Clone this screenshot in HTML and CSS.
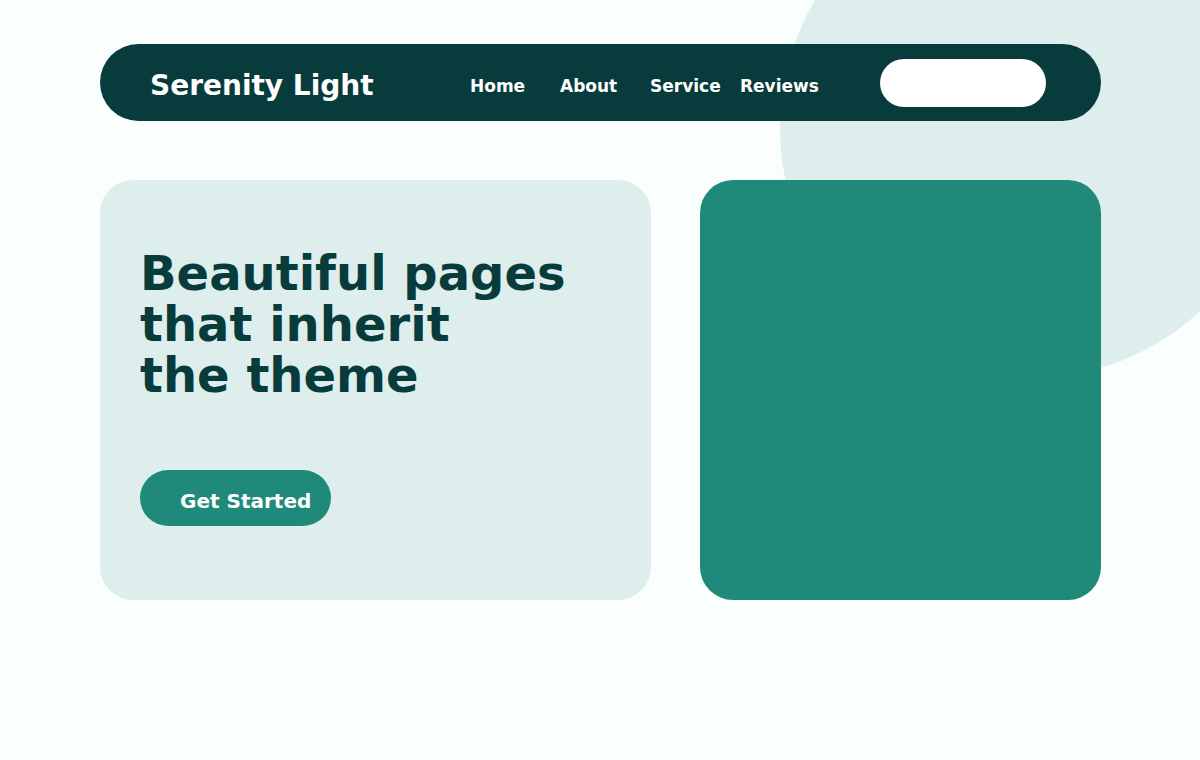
FILE: index.html
```html
<!DOCTYPE html>
<html lang="en">
<head>
<meta charset="utf-8">
<title>Serenity Light</title>
<link rel="stylesheet" href="styles.css">
</head>
<body>
<div class="page">
  <header class="nav">
    <div class="logo">Serenity Light</div>
    <nav class="links">
      <a href="#">Home</a>
      <a href="#">About</a>
      <a href="#">Service</a>
      <a href="#">Reviews</a>
    </nav>
    <div class="pill"></div>
  </header>
  <main class="hero">
    <section class="card-text">
      <h1>Beautiful pages<br>that inherit<br>the theme</h1>
      <a class="cta" href="#">Get Started</a>
    </section>
    <section class="card-media"></section>
  </main>
</div>
</body>
</html>
```

FILE: styles.css
```css
html, body {
  margin: 0;
  padding: 0;
}
body {
  background:
    radial-gradient(circle 250px at 1030px 128px, #ddeeec 249.5px, rgba(221, 238, 236, 0) 250.5px),
    #fafefd;
  font-family: "DejaVu Sans", "Noto Sans", sans-serif;
  width: 1200px;
  height: 760px;
  overflow: hidden;
}
.page {
  width: 1001px;
  margin-left: 100px;
  padding-top: 44px;
}
.nav {
  display: flex;
  align-items: center;
  height: 77px;
  background: #083c3c;
  border-radius: 39px;
  padding-left: 50px;
  box-sizing: border-box;
}
.logo {
  flex: 0 0 320px;
  color: #ffffff;
  font-weight: bold;
  font-size: 28px;
  line-height: 1;
  margin-top: 6px;
}
.links {
  display: flex;
  width: 360px;
}
.links a {
  flex: 0 0 90px;
  color: #ffffff;
  font-weight: bold;
  font-size: 17px;
  text-decoration: none;
  line-height: 1;
  margin-top: 7px;
}
.pill {
  margin-left: 50px;
  width: 166px;
  height: 48px;
  border-radius: 24px;
  background: #ffffff;
}
.hero {
  display: flex;
  gap: 49px;
  margin-top: 59px;
}
.card-text {
  flex: 0 0 551px;
  height: 420px;
  box-sizing: border-box;
  background: #ddeeec;
  border-radius: 33px;
  padding: 68px 40px 0;
}
.card-text h1 {
  margin: 0;
  color: #083c3c;
  font-size: 48px;
  line-height: 51px;
  font-weight: bold;
}
.cta {
  display: inline-flex;
  align-items: center;
  margin-top: 69px;
  height: 56px;
  padding: 5px 20px 0 40px;
  border-radius: 28px;
  background: #1f8a7a;
  color: #ffffff;
  font-weight: bold;
  font-size: 20px;
  text-decoration: none;
  box-sizing: border-box;
}
.card-media {
  flex: 0 0 401px;
  height: 420px;
  background: #1f8a7a;
  border-radius: 33px;
}
```
